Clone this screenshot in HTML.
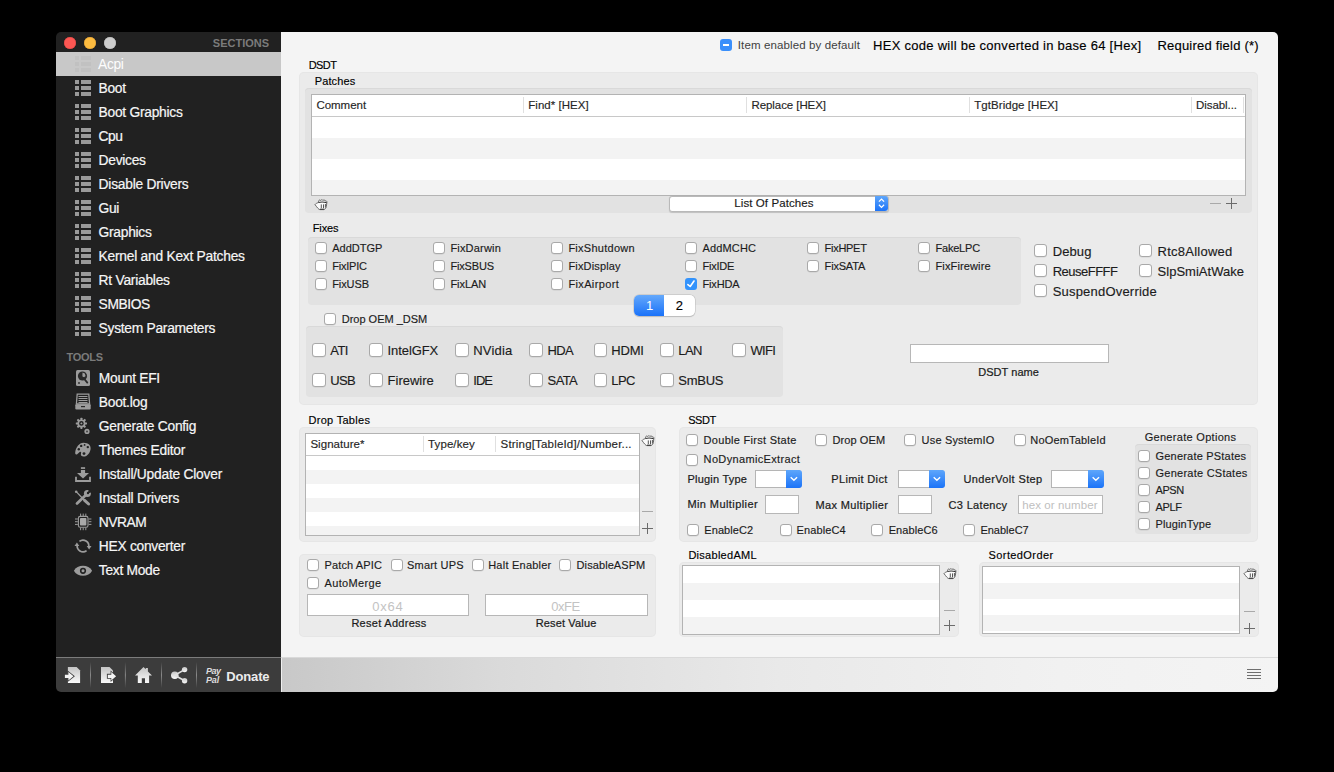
<!DOCTYPE html>
<html><head><meta charset="utf-8"><title>Clover Configurator - Acpi</title>
<style>
html,body{margin:0;padding:0;}
body{width:1334px;height:772px;background:#000;position:relative;overflow:hidden;font-family:"Liberation Sans",sans-serif;}
body div{position:absolute;box-sizing:content-box;}
.t{white-space:nowrap;}
.cbx{background:#fff;border:1px solid #a9a9a9;box-shadow:0 0.5px 0.5px rgba(0,0,0,0.10);}
.cbx.on{background:#3393fc;border:none;box-shadow:none;}
.cbx svg{position:absolute;left:0;top:0;}
</style></head><body>
<div style="left:56px;top:32px;width:1222px;height:660px;border-radius:5px;overflow:hidden;">
<div style="left:225px;top:0;width:997px;height:625px;background:#f4f4f4;"></div>
<div style="left:0;top:0;width:225px;height:625px;background:#212121;"></div>
<div style="left:0;top:20px;width:225px;height:24px;background:#c8c8c8;"></div>
<div style="left:0;top:625px;width:225px;height:35px;background:#3c3c3c;border-top:1px solid #7c7c7c;box-sizing:border-box;"></div>
<div style="left:225px;top:625px;width:997px;height:35px;background:linear-gradient(to right,#c8c8c8 0%,#dadada 22%,#e9e9e9 50%,#f1f1f1 78%,#f4f4f4 100%);border-top:1px solid #d9d9d9;box-sizing:border-box;"></div>
<div style="left:225px;top:626px;width:1px;height:34px;background:#efefef;"></div>
</div>
<div style="left:64px;top:37px;width:12px;height:12px;border-radius:50%;background:#fc5753;box-shadow:inset 0 0 0 0.5px #df4744;"></div>
<div style="left:84px;top:37px;width:12px;height:12px;border-radius:50%;background:#fdbc40;box-shadow:inset 0 0 0 0.5px #de9f34;"></div>
<div style="left:104px;top:37px;width:12px;height:12px;border-radius:50%;background:#cdcdcd;box-shadow:inset 0 0 0 0.5px #b9b9b9;"></div>
<div class="t" style="left:212.80px;top:38.00px;font-size:11px;line-height:11px;color:#7b7b7b;font-weight:bold;letter-spacing:-0.001px;">SECTIONS</div>
<div style="left:75px;top:56px;width:4px;height:4px;background:#c1c1c1;"></div>
<div style="left:81px;top:56px;width:10px;height:4px;background:#c1c1c1;"></div>
<div style="left:75px;top:62px;width:4px;height:4px;background:#c1c1c1;"></div>
<div style="left:81px;top:62px;width:10px;height:4px;background:#c1c1c1;"></div>
<div style="left:75px;top:68px;width:4px;height:4px;background:#c1c1c1;"></div>
<div style="left:81px;top:68px;width:10px;height:4px;background:#c1c1c1;"></div>
<div class="t" style="left:98.00px;top:58.00px;font-size:13.8px;line-height:13.8px;color:#fdfdfd;letter-spacing:-0.323px;">Acpi</div>
<div style="left:75px;top:80px;width:4px;height:4px;background:#9a9a9a;"></div>
<div style="left:81px;top:80px;width:10px;height:4px;background:#9a9a9a;"></div>
<div style="left:75px;top:86px;width:4px;height:4px;background:#9a9a9a;"></div>
<div style="left:81px;top:86px;width:10px;height:4px;background:#9a9a9a;"></div>
<div style="left:75px;top:92px;width:4px;height:4px;background:#9a9a9a;"></div>
<div style="left:81px;top:92px;width:10px;height:4px;background:#9a9a9a;"></div>
<div class="t" style="left:98.60px;top:82.00px;font-size:13.8px;line-height:13.8px;color:#f6f6f6;-webkit-text-stroke:0.2px #f6f6f6;letter-spacing:-0.333px;">Boot</div>
<div style="left:75px;top:104px;width:4px;height:4px;background:#9a9a9a;"></div>
<div style="left:81px;top:104px;width:10px;height:4px;background:#9a9a9a;"></div>
<div style="left:75px;top:110px;width:4px;height:4px;background:#9a9a9a;"></div>
<div style="left:81px;top:110px;width:10px;height:4px;background:#9a9a9a;"></div>
<div style="left:75px;top:116px;width:4px;height:4px;background:#9a9a9a;"></div>
<div style="left:81px;top:116px;width:10px;height:4px;background:#9a9a9a;"></div>
<div class="t" style="left:98.60px;top:106.00px;font-size:13.8px;line-height:13.8px;color:#f6f6f6;-webkit-text-stroke:0.2px #f6f6f6;letter-spacing:-0.263px;">Boot Graphics</div>
<div style="left:75px;top:128px;width:4px;height:4px;background:#9a9a9a;"></div>
<div style="left:81px;top:128px;width:10px;height:4px;background:#9a9a9a;"></div>
<div style="left:75px;top:134px;width:4px;height:4px;background:#9a9a9a;"></div>
<div style="left:81px;top:134px;width:10px;height:4px;background:#9a9a9a;"></div>
<div style="left:75px;top:140px;width:4px;height:4px;background:#9a9a9a;"></div>
<div style="left:81px;top:140px;width:10px;height:4px;background:#9a9a9a;"></div>
<div class="t" style="left:98.60px;top:130.00px;font-size:13.8px;line-height:13.8px;color:#f6f6f6;-webkit-text-stroke:0.2px #f6f6f6;letter-spacing:-0.463px;">Cpu</div>
<div style="left:75px;top:152px;width:4px;height:4px;background:#9a9a9a;"></div>
<div style="left:81px;top:152px;width:10px;height:4px;background:#9a9a9a;"></div>
<div style="left:75px;top:158px;width:4px;height:4px;background:#9a9a9a;"></div>
<div style="left:81px;top:158px;width:10px;height:4px;background:#9a9a9a;"></div>
<div style="left:75px;top:164px;width:4px;height:4px;background:#9a9a9a;"></div>
<div style="left:81px;top:164px;width:10px;height:4px;background:#9a9a9a;"></div>
<div class="t" style="left:98.60px;top:154.00px;font-size:13.8px;line-height:13.8px;color:#f6f6f6;-webkit-text-stroke:0.2px #f6f6f6;letter-spacing:-0.293px;">Devices</div>
<div style="left:75px;top:176px;width:4px;height:4px;background:#9a9a9a;"></div>
<div style="left:81px;top:176px;width:10px;height:4px;background:#9a9a9a;"></div>
<div style="left:75px;top:182px;width:4px;height:4px;background:#9a9a9a;"></div>
<div style="left:81px;top:182px;width:10px;height:4px;background:#9a9a9a;"></div>
<div style="left:75px;top:188px;width:4px;height:4px;background:#9a9a9a;"></div>
<div style="left:81px;top:188px;width:10px;height:4px;background:#9a9a9a;"></div>
<div class="t" style="left:98.60px;top:178.00px;font-size:13.8px;line-height:13.8px;color:#f6f6f6;-webkit-text-stroke:0.2px #f6f6f6;letter-spacing:-0.243px;">Disable Drivers</div>
<div style="left:75px;top:200px;width:4px;height:4px;background:#9a9a9a;"></div>
<div style="left:81px;top:200px;width:10px;height:4px;background:#9a9a9a;"></div>
<div style="left:75px;top:206px;width:4px;height:4px;background:#9a9a9a;"></div>
<div style="left:81px;top:206px;width:10px;height:4px;background:#9a9a9a;"></div>
<div style="left:75px;top:212px;width:4px;height:4px;background:#9a9a9a;"></div>
<div style="left:81px;top:212px;width:10px;height:4px;background:#9a9a9a;"></div>
<div class="t" style="left:98.60px;top:202.00px;font-size:13.8px;line-height:13.8px;color:#f6f6f6;-webkit-text-stroke:0.2px #f6f6f6;letter-spacing:-0.382px;">Gui</div>
<div style="left:75px;top:224px;width:4px;height:4px;background:#9a9a9a;"></div>
<div style="left:81px;top:224px;width:10px;height:4px;background:#9a9a9a;"></div>
<div style="left:75px;top:230px;width:4px;height:4px;background:#9a9a9a;"></div>
<div style="left:81px;top:230px;width:10px;height:4px;background:#9a9a9a;"></div>
<div style="left:75px;top:236px;width:4px;height:4px;background:#9a9a9a;"></div>
<div style="left:81px;top:236px;width:10px;height:4px;background:#9a9a9a;"></div>
<div class="t" style="left:98.60px;top:226.00px;font-size:13.8px;line-height:13.8px;color:#f6f6f6;-webkit-text-stroke:0.2px #f6f6f6;letter-spacing:-0.283px;">Graphics</div>
<div style="left:75px;top:248px;width:4px;height:4px;background:#9a9a9a;"></div>
<div style="left:81px;top:248px;width:10px;height:4px;background:#9a9a9a;"></div>
<div style="left:75px;top:254px;width:4px;height:4px;background:#9a9a9a;"></div>
<div style="left:81px;top:254px;width:10px;height:4px;background:#9a9a9a;"></div>
<div style="left:75px;top:260px;width:4px;height:4px;background:#9a9a9a;"></div>
<div style="left:81px;top:260px;width:10px;height:4px;background:#9a9a9a;"></div>
<div class="t" style="left:98.60px;top:250.00px;font-size:13.8px;line-height:13.8px;color:#f6f6f6;-webkit-text-stroke:0.2px #f6f6f6;letter-spacing:-0.249px;">Kernel and Kext Patches</div>
<div style="left:75px;top:272px;width:4px;height:4px;background:#9a9a9a;"></div>
<div style="left:81px;top:272px;width:10px;height:4px;background:#9a9a9a;"></div>
<div style="left:75px;top:278px;width:4px;height:4px;background:#9a9a9a;"></div>
<div style="left:81px;top:278px;width:10px;height:4px;background:#9a9a9a;"></div>
<div style="left:75px;top:284px;width:4px;height:4px;background:#9a9a9a;"></div>
<div style="left:81px;top:284px;width:10px;height:4px;background:#9a9a9a;"></div>
<div class="t" style="left:98.60px;top:274.00px;font-size:13.8px;line-height:13.8px;color:#f6f6f6;-webkit-text-stroke:0.2px #f6f6f6;letter-spacing:-0.248px;">Rt Variables</div>
<div style="left:75px;top:296px;width:4px;height:4px;background:#9a9a9a;"></div>
<div style="left:81px;top:296px;width:10px;height:4px;background:#9a9a9a;"></div>
<div style="left:75px;top:302px;width:4px;height:4px;background:#9a9a9a;"></div>
<div style="left:81px;top:302px;width:10px;height:4px;background:#9a9a9a;"></div>
<div style="left:75px;top:308px;width:4px;height:4px;background:#9a9a9a;"></div>
<div style="left:81px;top:308px;width:10px;height:4px;background:#9a9a9a;"></div>
<div class="t" style="left:98.60px;top:298.00px;font-size:13.8px;line-height:13.8px;color:#f6f6f6;-webkit-text-stroke:0.2px #f6f6f6;letter-spacing:-0.390px;">SMBIOS</div>
<div style="left:75px;top:320px;width:4px;height:4px;background:#9a9a9a;"></div>
<div style="left:81px;top:320px;width:10px;height:4px;background:#9a9a9a;"></div>
<div style="left:75px;top:326px;width:4px;height:4px;background:#9a9a9a;"></div>
<div style="left:81px;top:326px;width:10px;height:4px;background:#9a9a9a;"></div>
<div style="left:75px;top:332px;width:4px;height:4px;background:#9a9a9a;"></div>
<div style="left:81px;top:332px;width:10px;height:4px;background:#9a9a9a;"></div>
<div class="t" style="left:98.60px;top:322.00px;font-size:13.8px;line-height:13.8px;color:#f6f6f6;-webkit-text-stroke:0.2px #f6f6f6;letter-spacing:-0.274px;">System Parameters</div>
<div class="t" style="left:66.50px;top:352.00px;font-size:11px;line-height:11px;color:#7a7a7a;font-weight:bold;letter-spacing:-0.269px;">TOOLS</div>
<div class="t" style="left:98.80px;top:372.00px;font-size:13.8px;line-height:13.8px;color:#f6f6f6;-webkit-text-stroke:0.2px #f6f6f6;letter-spacing:-0.293px;">Mount EFI</div>
<div class="t" style="left:98.80px;top:396.00px;font-size:13.8px;line-height:13.8px;color:#f6f6f6;-webkit-text-stroke:0.2px #f6f6f6;letter-spacing:-0.264px;">Boot.log</div>
<div class="t" style="left:98.80px;top:420.00px;font-size:13.8px;line-height:13.8px;color:#f6f6f6;-webkit-text-stroke:0.2px #f6f6f6;letter-spacing:-0.265px;">Generate Config</div>
<div class="t" style="left:98.80px;top:444.00px;font-size:13.8px;line-height:13.8px;color:#f6f6f6;-webkit-text-stroke:0.2px #f6f6f6;letter-spacing:-0.274px;">Themes Editor</div>
<div class="t" style="left:98.80px;top:468.00px;font-size:13.8px;line-height:13.8px;color:#f6f6f6;-webkit-text-stroke:0.2px #f6f6f6;letter-spacing:-0.231px;">Install/Update Clover</div>
<div class="t" style="left:98.80px;top:492.00px;font-size:13.8px;line-height:13.8px;color:#f6f6f6;-webkit-text-stroke:0.2px #f6f6f6;letter-spacing:-0.215px;">Install Drivers</div>
<div class="t" style="left:98.80px;top:516.00px;font-size:13.8px;line-height:13.8px;color:#f6f6f6;-webkit-text-stroke:0.2px #f6f6f6;letter-spacing:-0.447px;">NVRAM</div>
<div class="t" style="left:98.80px;top:540.00px;font-size:13.8px;line-height:13.8px;color:#f6f6f6;-webkit-text-stroke:0.2px #f6f6f6;letter-spacing:-0.274px;">HEX converter</div>
<div class="t" style="left:98.80px;top:564.00px;font-size:13.8px;line-height:13.8px;color:#f6f6f6;-webkit-text-stroke:0.2px #f6f6f6;letter-spacing:-0.292px;">Text Mode</div>
<svg style="position:absolute;left:75px;top:369px;" width="16" height="18" viewBox="0 0 16 18"><rect x="1" y="1" width="14" height="16" rx="1.5" fill="#9c9c9c"/><circle cx="7.5" cy="7" r="4.6" fill="#2a2a2a"/><path d="M7.5 3.6 L9.8 4.6 L10.6 7 L8.8 8.4 L7.4 7.2Z" fill="#9c9c9c"/><path d="M8.5 9 L12.3 13.6" stroke="#2a2a2a" stroke-width="1.8" stroke-linecap="round"/><circle cx="4" cy="14" r="0.9" fill="#2a2a2a"/></svg>
<svg style="position:absolute;left:75px;top:393px;" width="16" height="18" viewBox="0 0 16 18"><path d="M2.2 1.2 H13.8 L14.6 11 H1.4 Z" fill="none" stroke="#9c9c9c" stroke-width="1.3"/><rect x="3.5" y="3" width="9" height="1" fill="#9c9c9c"/><rect x="3.5" y="5" width="9" height="1" fill="#9c9c9c"/><rect x="3.5" y="7" width="9" height="1" fill="#9c9c9c"/><rect x="3.5" y="9" width="9" height="1" fill="#9c9c9c"/><rect x="0.3" y="11.3" width="15.4" height="5.2" rx="1" fill="#9c9c9c"/><rect x="6" y="13" width="4" height="1.2" fill="#2a2a2a"/></svg>
<svg style="position:absolute;left:75px;top:416px;" width="16" height="18" viewBox="0 0 16 18"><rect x="5.40" y="1.80" width="2.0" height="2.60" rx="0.4" fill="#9c9c9c" transform="rotate(0.0 6.4 7.4)"/><rect x="5.40" y="1.80" width="2.0" height="2.60" rx="0.4" fill="#9c9c9c" transform="rotate(45.0 6.4 7.4)"/><rect x="5.40" y="1.80" width="2.0" height="2.60" rx="0.4" fill="#9c9c9c" transform="rotate(90.0 6.4 7.4)"/><rect x="5.40" y="1.80" width="2.0" height="2.60" rx="0.4" fill="#9c9c9c" transform="rotate(135.0 6.4 7.4)"/><rect x="5.40" y="1.80" width="2.0" height="2.60" rx="0.4" fill="#9c9c9c" transform="rotate(180.0 6.4 7.4)"/><rect x="5.40" y="1.80" width="2.0" height="2.60" rx="0.4" fill="#9c9c9c" transform="rotate(225.0 6.4 7.4)"/><rect x="5.40" y="1.80" width="2.0" height="2.60" rx="0.4" fill="#9c9c9c" transform="rotate(270.0 6.4 7.4)"/><rect x="5.40" y="1.80" width="2.0" height="2.60" rx="0.4" fill="#9c9c9c" transform="rotate(315.0 6.4 7.4)"/><circle cx="6.4" cy="7.4" r="4.0" fill="#9c9c9c"/><circle cx="6.4" cy="7.4" r="2.3" fill="#232323"/><rect x="5.6" y="6.6" width="1.6" height="1.6" fill="#9c9c9c" transform="rotate(45 6.4 7.4)"/><circle cx="12" cy="15.4" r="2.6" fill="#9c9c9c"/><circle cx="12" cy="15.4" r="1.0" fill="#444"/></svg>
<svg style="position:absolute;left:74px;top:441px;" width="18" height="17" viewBox="0 0 18 17"><path d="M9.5 1.8 C14.5 1.8 17 4.6 16.6 8 C16.2 11.4 13.6 15.6 9.6 15.6 C7.6 15.6 6.4 14.4 7 12.6 C7.6 11 6.6 10.2 5.4 11.2 L3.2 13.2 C1.6 14.2 0.9 12.8 1.3 10.8 C2 6.2 5.2 1.8 9.5 1.8Z" fill="#9c9c9c"/><circle cx="4.8" cy="8.2" r="1.2" fill="#212121"/><circle cx="7.2" cy="4.9" r="1.2" fill="#212121"/><circle cx="10.6" cy="3.9" r="0.9" fill="#212121"/><circle cx="13.8" cy="6.1" r="1.2" fill="#212121"/><circle cx="10" cy="12.6" r="1.4" fill="#212121"/></svg>
<svg style="position:absolute;left:75px;top:465px;" width="16" height="18" viewBox="0 0 16 18"><rect x="5.9" y="2.2" width="4.2" height="1.7" fill="#9c9c9c"/><path d="M5.9 4.9 H10.1 V7.9 H14.0 L8 13.4 L2.0 7.9 H5.9Z" fill="#9c9c9c"/><path d="M1.0 11.8 V16.0 H15.0 V11.8" fill="none" stroke="#9c9c9c" stroke-width="1.8"/></svg>
<svg style="position:absolute;left:72px;top:486px;" width="22" height="22" viewBox="0 0 22 22"><path d="M4.40 5.90 L12.40 14.20" stroke="#9c9c9c" stroke-width="1.3" stroke-linecap="round"/><circle cx="4.200000000000003" cy="5.699999999999989" r="1.3" fill="#9c9c9c"/><path d="M12.60 14.40 L16.60 18.00" stroke="#9c9c9c" stroke-width="3.0" stroke-linecap="round"/><path d="M5.00 17.40 L13.60 9.20" stroke="#9c9c9c" stroke-width="2.8" stroke-linecap="round"/><circle cx="15.400000000000006" cy="7.600000000000023" r="3.5" fill="#9c9c9c"/><path d="M15.60 7.40 L17.00 3.00 L20.40 6.00 Z" fill="#212121"/><circle cx="16.0" cy="7.0" r="1.2" fill="#212121"/></svg>
<svg style="position:absolute;left:72px;top:510px;" width="22" height="22" viewBox="0 0 22 22"><rect x="6.400000000000006" y="6.399999999999977" width="9.6" height="10.8" rx="1.8" fill="none" stroke="#9c9c9c" stroke-width="1.1"/><rect x="8.0" y="8.0" width="6.4" height="7.6" rx="0.8" fill="#a9a9a9"/><rect x="8.10" y="3.6000000000000227" width="1" height="2.6" fill="#9c9c9c"/><rect x="8.10" y="17.600000000000023" width="1" height="2.6" fill="#9c9c9c"/><rect x="3.0" y="8.50" width="2.8" height="1" fill="#9c9c9c"/><rect x="16.599999999999994" y="8.50" width="2.8" height="1" fill="#9c9c9c"/><rect x="10.70" y="3.6000000000000227" width="1" height="2.6" fill="#9c9c9c"/><rect x="10.70" y="17.600000000000023" width="1" height="2.6" fill="#9c9c9c"/><rect x="3.0" y="11.20" width="2.8" height="1" fill="#9c9c9c"/><rect x="16.599999999999994" y="11.20" width="2.8" height="1" fill="#9c9c9c"/><rect x="13.30" y="3.6000000000000227" width="1" height="2.6" fill="#9c9c9c"/><rect x="13.30" y="17.600000000000023" width="1" height="2.6" fill="#9c9c9c"/><rect x="3.0" y="13.90" width="2.8" height="1" fill="#9c9c9c"/><rect x="16.599999999999994" y="13.90" width="2.8" height="1" fill="#9c9c9c"/></svg>
<svg style="position:absolute;left:70px;top:534px;" width="24" height="24" viewBox="0 0 24 24"><path d="M9.43 7.43 A5.8 5.8 0 0 1 18.67 13.21" fill="none" stroke="#9c9c9c" stroke-width="1.7"/><path d="M16.57 16.57 A5.8 5.8 0 0 1 7.33 10.79" fill="none" stroke="#9c9c9c" stroke-width="1.7"/><path d="M16.7 12.0 L21.5 12.0 L19.1 15.6Z" fill="#9c9c9c"/><path d="M4.5 12.0 L9.3 12.0 L6.9 8.4Z" fill="#9c9c9c"/></svg>
<svg style="position:absolute;left:70px;top:560px;" width="24" height="20" viewBox="0 0 24 20"><path d="M3.9 10.8 C7.2 4.2 18.8 4.2 22.1 10.8 C18.8 17.4 7.2 17.4 3.9 10.8Z" fill="#9c9c9c"/><circle cx="13" cy="10.8" r="3.1" fill="#212121"/><circle cx="13" cy="10.8" r="1.5" fill="#9c9c9c"/></svg>
<svg style="position:absolute;left:56px;top:657px;" width="225" height="34" viewBox="0 0 225 34"><defs><linearGradient id="ig" x1="0" y1="0" x2="0" y2="1"><stop offset="0" stop-color="#c4c4c4"/><stop offset="1" stop-color="#fafafa"/></linearGradient>
<linearGradient id="sg" x1="0" y1="0" x2="0" y2="1"><stop offset="0" stop-color="#3c3c3c"/><stop offset="0.5" stop-color="#8a8a8a"/><stop offset="1" stop-color="#3c3c3c"/></linearGradient></defs><polygon points="11.90,10.00 20.60,10.00 24.10,13.50 24.10,26.00 11.90,26.00" fill="url(#ig)"/><polygon points="11.60,13.60 18.90,19.30 11.60,25.00 11.60,21.60 8.30,21.60 8.30,17.00 11.60,17.00" fill="#3c3c3c"/><polygon points="12.40,15.00 17.50,19.30 12.40,23.60 12.40,20.90 8.90,20.90 8.90,17.70 12.40,17.70" fill="#f4f4f4"/><polygon points="45.00,10.00 53.50,10.00 57.00,13.50 57.00,26.00 45.00,26.00" fill="url(#ig)"/><polygon points="54.60,13.60 61.20,19.30 54.60,25.00 54.60,21.80 50.90,21.80 50.90,16.80 54.60,16.80" fill="#3c3c3c"/><polygon points="55.30,15.00 60.10,19.30 55.30,23.60 55.30,20.90 51.80,20.90 51.80,17.70 55.30,17.70" fill="#f4f4f4"/><polygon points="87.50,10.00 89.80,12.30 89.80,10.90 91.90,10.90 91.90,14.40 96.00,18.60 93.10,18.60 93.10,26.00 89.00,26.00 89.00,21.20 85.80,21.20 85.80,26.00 81.80,26.00 81.80,18.60 79.00,18.60" fill="url(#ig)"/><g fill="url(#ig)" stroke="none"><circle cx="118.80000000000001" cy="18.200000000000045" r="3.8"/><circle cx="128.6" cy="12.600000000000023" r="2.7"/><circle cx="128.6" cy="23.700000000000045" r="2.7"/></g><path d="M118.80000000000001 18.200000000000045 L128.6 12.600000000000023 M118.80000000000001 18.200000000000045 L128.6 23.700000000000045" stroke="#e0e0e0" stroke-width="1.6"/><rect x="34.00" y="5" width="1" height="26" fill="url(#sg)"/><rect x="68.90" y="5" width="1" height="26" fill="url(#sg)"/><rect x="105.00" y="5" width="1" height="26" fill="url(#sg)"/><rect x="140.00" y="5" width="1" height="26" fill="url(#sg)"/></svg>
<div class="t" style="left:206.00px;top:667.00px;font-size:9px;line-height:9px;color:#dcdcdc;font-weight:bold;font-style:italic;letter-spacing:-0.513px;">Pay</div>
<div class="t" style="left:206.00px;top:676.00px;font-size:9px;line-height:9px;color:#dcdcdc;font-weight:bold;font-style:italic;letter-spacing:-0.140px;">Pal</div>
<div class="t" style="left:226.30px;top:670.00px;font-size:13px;line-height:13px;color:#ececec;font-weight:bold;letter-spacing:-0.154px;">Donate</div>
<div style="left:1247px;top:669px;width:14px;height:1px;background:#6f6f6f;"></div>
<div style="left:1247px;top:672px;width:14px;height:1px;background:#6f6f6f;"></div>
<div style="left:1247px;top:675px;width:14px;height:1px;background:#6f6f6f;"></div>
<div style="left:1247px;top:678px;width:14px;height:1px;background:#6f6f6f;"></div>
<div style="left:720px;top:39px;width:12px;height:12px;border-radius:3px;background:#3a8ffb;"></div>
<div style="left:723px;top:44px;width:6px;height:2px;background:#fff;"></div>
<div class="t" style="left:737.80px;top:40.00px;font-size:11.5px;line-height:11.5px;color:#3f3f3f;letter-spacing:0.116px;">Item enabled by default</div>
<div class="t" style="left:873.10px;top:39.00px;font-size:13px;line-height:13px;color:#000;-webkit-text-stroke:0.15px #000;letter-spacing:0.272px;">HEX code will be converted in base 64 [Hex]</div>
<div class="t" style="left:1157.40px;top:39.00px;font-size:13px;line-height:13px;color:#000;-webkit-text-stroke:0.15px #000;letter-spacing:0.214px;">Required field (*)</div>
<div class="t" style="left:308.70px;top:60.00px;font-size:11px;line-height:11px;color:#000;-webkit-text-stroke:0.15px #000;letter-spacing:-0.573px;">DSDT</div>
<div style="left:299px;top:72px;width:959px;height:332.5px;background:#ebebeb;border-radius:5px;box-shadow:inset 0 0 0 1px #e6e6e6;"></div>
<div class="t" style="left:314.70px;top:76.00px;font-size:11px;line-height:11px;color:#000;-webkit-text-stroke:0.15px #000;letter-spacing:0.122px;">Patches</div>
<div style="left:305px;top:88px;width:947px;height:124.5px;background:#e2e2e2;border-radius:4px;box-shadow:inset 0 1px 0 #d9d9d9;"></div>
<div style="left:311px;top:94px;width:933.0px;height:100.0px;background:#fff;border:1px solid #b3b3b3;overflow:hidden;">
<div style="left:0;top:43.00px;width:935.00px;height:21.00px;background:#f3f3f3;"></div>
<div style="left:0;top:85.00px;width:935.00px;height:15.00px;background:#f3f3f3;"></div>
</div>
<div style="left:312px;top:116px;width:933px;height:1px;background:#c8c8c8;"></div>
<div style="left:523px;top:97px;width:1px;height:16px;background:#e0e0e0;"></div>
<div style="left:746px;top:97px;width:1px;height:16px;background:#e0e0e0;"></div>
<div style="left:969px;top:97px;width:1px;height:16px;background:#e0e0e0;"></div>
<div style="left:1191px;top:97px;width:1px;height:16px;background:#e0e0e0;"></div>
<div style="left:1243px;top:97px;width:1px;height:16px;background:#e0e0e0;"></div>
<div class="t" style="left:316.40px;top:100.00px;font-size:11.5px;line-height:11.5px;color:#262626;-webkit-text-stroke:0.15px #262626;letter-spacing:-0.025px;">Comment</div>
<div class="t" style="left:528.30px;top:100.00px;font-size:11.5px;line-height:11.5px;color:#262626;-webkit-text-stroke:0.15px #262626;letter-spacing:0.021px;">Find* [HEX]</div>
<div class="t" style="left:751.50px;top:100.00px;font-size:11.5px;line-height:11.5px;color:#262626;-webkit-text-stroke:0.15px #262626;letter-spacing:-0.078px;">Replace [HEX]</div>
<div class="t" style="left:974.30px;top:100.00px;font-size:11.5px;line-height:11.5px;color:#262626;-webkit-text-stroke:0.15px #262626;letter-spacing:0.044px;">TgtBridge [HEX]</div>
<div class="t" style="left:1196.00px;top:100.00px;font-size:11.5px;line-height:11.5px;color:#262626;-webkit-text-stroke:0.15px #262626;letter-spacing:-0.064px;">Disabl...</div>
<svg style="position:absolute;left:314px;top:198px;" width="14" height="13" viewBox="0 0 14 13"><path d="M1.0 6.6 C1.6 5.6 3.0 5.0 4.4 4.6 L4.6 3.2 C4.8 1.9 6.1 1.6 6.7 2.6 C7.2 1.4 8.6 1.4 9.0 2.6 C9.6 1.6 10.9 1.8 11.1 3.0 C11.9 2.5 13.0 3.0 12.9 4.2 L12.4 8.4 C12.1 10.2 11.0 11.4 9.6 11.6 L5.8 11.6 C4.6 11.4 3.4 9.8 1.0 6.6Z" fill="#fbfbfb" stroke="#5a5a5a" stroke-width="0.9" stroke-linejoin="round"/><path d="M4.5 4.6 C6.5 3.9 9.5 3.9 12.6 4.6" fill="none" stroke="#333" stroke-width="1.1"/><path d="M7.3 6.4 V10.2 M9.5 6.4 V10.2 M11.4 6.0 V9.6" stroke="#444" stroke-width="0.9"/><path d="M6.0 11.2 H10.2" stroke="#333" stroke-width="1.0"/></svg>
<div style="left:668.5px;top:196.3px;width:218.50px;height:13.40px;background:#fff;border:0.5px solid #b9b9b9;border-radius:3px;box-shadow:0 0.5px 1px rgba(0,0,0,0.15);"></div>
<div style="left:875px;top:196.3px;width:13.00px;height:14.40px;background:linear-gradient(#5ea6fb,#1b73f8);border-radius:0 3px 3px 0;"></div>
<svg style="position:absolute;left:875px;top:196.3px;" width="13" height="14.4" viewBox="0 0 13 14.4"><path d="M3.90 5.60 L6.50 3.00 L9.10 5.60 M3.90 8.80 L6.50 11.40 L9.10 8.80" fill="none" stroke="#fff" stroke-width="1.2"/></svg>
<div class="t" style="left:734.30px;top:198.00px;font-size:11.5px;line-height:11.5px;color:#1a1a1a;-webkit-text-stroke:0.15px #1a1a1a;letter-spacing:0.088px;">List Of Patches</div>
<div style="left:1210px;top:203px;width:11px;height:1px;background:#a9a9a9;"></div>
<div style="left:1226px;top:203px;width:11px;height:1px;background:#6b6b6b;"></div>
<div style="left:1231px;top:198px;width:1px;height:11px;background:#6b6b6b;"></div>
<div class="t" style="left:312.80px;top:223.00px;font-size:11px;line-height:11px;color:#000;-webkit-text-stroke:0.15px #000;letter-spacing:-0.147px;">Fixes</div>
<div style="left:308px;top:237px;width:713px;height:67.5px;background:#e2e2e2;border-radius:4px;box-shadow:inset 0 1px 0 #d9d9d9;"></div>
<div class="cbx" style="left:315px;top:242px;width:10px;height:10px;border-radius:3px;"></div>
<div class="t" style="left:332.20px;top:243.00px;font-size:11px;line-height:11px;color:#1c1c1c;-webkit-text-stroke:0.15px #1c1c1c;">AddDTGP</div>
<div class="cbx" style="left:315px;top:260px;width:10px;height:10px;border-radius:3px;"></div>
<div class="t" style="left:332.20px;top:261.00px;font-size:11px;line-height:11px;color:#1c1c1c;-webkit-text-stroke:0.15px #1c1c1c;letter-spacing:-0.213px;">FixIPIC</div>
<div class="cbx" style="left:315px;top:278px;width:10px;height:10px;border-radius:3px;"></div>
<div class="t" style="left:332.20px;top:279.00px;font-size:11px;line-height:11px;color:#1c1c1c;-webkit-text-stroke:0.15px #1c1c1c;letter-spacing:-0.078px;">FixUSB</div>
<div class="cbx" style="left:433px;top:242px;width:10px;height:10px;border-radius:3px;"></div>
<div class="t" style="left:450.40px;top:243.00px;font-size:11px;line-height:11px;color:#1c1c1c;-webkit-text-stroke:0.15px #1c1c1c;letter-spacing:0.188px;">FixDarwin</div>
<div class="cbx" style="left:433px;top:260px;width:10px;height:10px;border-radius:3px;"></div>
<div class="t" style="left:450.40px;top:261.00px;font-size:11px;line-height:11px;color:#1c1c1c;-webkit-text-stroke:0.15px #1c1c1c;letter-spacing:-0.167px;">FixSBUS</div>
<div class="cbx" style="left:433px;top:278px;width:10px;height:10px;border-radius:3px;"></div>
<div class="t" style="left:450.40px;top:279.00px;font-size:11px;line-height:11px;color:#1c1c1c;-webkit-text-stroke:0.15px #1c1c1c;letter-spacing:-0.036px;">FixLAN</div>
<div class="cbx" style="left:551px;top:242px;width:10px;height:10px;border-radius:3px;"></div>
<div class="t" style="left:568.40px;top:243.00px;font-size:11px;line-height:11px;color:#1c1c1c;-webkit-text-stroke:0.15px #1c1c1c;letter-spacing:0.262px;">FixShutdown</div>
<div class="cbx" style="left:551px;top:260px;width:10px;height:10px;border-radius:3px;"></div>
<div class="t" style="left:568.40px;top:261.00px;font-size:11px;line-height:11px;color:#1c1c1c;-webkit-text-stroke:0.15px #1c1c1c;letter-spacing:0.166px;">FixDisplay</div>
<div class="cbx" style="left:551px;top:278px;width:10px;height:10px;border-radius:3px;"></div>
<div class="t" style="left:568.40px;top:279.00px;font-size:11px;line-height:11px;color:#1c1c1c;-webkit-text-stroke:0.15px #1c1c1c;letter-spacing:0.369px;">FixAirport</div>
<div class="cbx" style="left:685px;top:242px;width:10px;height:10px;border-radius:3px;"></div>
<div class="t" style="left:702.50px;top:243.00px;font-size:11px;line-height:11px;color:#1c1c1c;-webkit-text-stroke:0.15px #1c1c1c;letter-spacing:0.153px;">AddMCHC</div>
<div class="cbx" style="left:685px;top:260px;width:10px;height:10px;border-radius:3px;"></div>
<div class="t" style="left:702.50px;top:261.00px;font-size:11px;line-height:11px;color:#1c1c1c;-webkit-text-stroke:0.15px #1c1c1c;letter-spacing:-0.240px;">FixIDE</div>
<div class="cbx on" style="left:685px;top:278px;width:12px;height:12px;border-radius:3px;"><svg width="12" height="12" viewBox="0 0 12 12"><path d="M2.9 6.6 L5.2 8.5 L9.0 3.0" fill="none" stroke="#fff" stroke-width="1.6" stroke-linecap="round" stroke-linejoin="round"/></svg></div>
<div class="t" style="left:702.50px;top:279.00px;font-size:11px;line-height:11px;color:#1c1c1c;-webkit-text-stroke:0.15px #1c1c1c;letter-spacing:-0.159px;">FixHDA</div>
<div class="cbx" style="left:807px;top:242px;width:10px;height:10px;border-radius:3px;"></div>
<div class="t" style="left:824.60px;top:243.00px;font-size:11px;line-height:11px;color:#1c1c1c;-webkit-text-stroke:0.15px #1c1c1c;letter-spacing:-0.283px;">FixHPET</div>
<div class="cbx" style="left:807px;top:260px;width:10px;height:10px;border-radius:3px;"></div>
<div class="t" style="left:824.60px;top:261.00px;font-size:11px;line-height:11px;color:#1c1c1c;-webkit-text-stroke:0.15px #1c1c1c;letter-spacing:-0.183px;">FixSATA</div>
<div class="cbx" style="left:918px;top:242px;width:10px;height:10px;border-radius:3px;"></div>
<div class="t" style="left:935.50px;top:243.00px;font-size:11px;line-height:11px;color:#1c1c1c;-webkit-text-stroke:0.15px #1c1c1c;letter-spacing:-0.212px;">FakeLPC</div>
<div class="cbx" style="left:918px;top:260px;width:10px;height:10px;border-radius:3px;"></div>
<div class="t" style="left:935.50px;top:261.00px;font-size:11px;line-height:11px;color:#1c1c1c;-webkit-text-stroke:0.15px #1c1c1c;letter-spacing:0.131px;">FixFirewire</div>
<div style="left:634px;top:295px;width:61px;height:21px;border-radius:5px;background:#fff;box-shadow:0 0 0 0.5px #bdbdbd, 0 0.5px 1px rgba(0,0,0,0.2);overflow:hidden;"><div style="left:0;top:0;width:30px;height:21px;background:linear-gradient(#64a8fb,#1a72f9);"></div></div>
<div class="t" style="left:645.89px;top:299.00px;font-size:13px;line-height:13px;color:#fff;">1</div>
<div class="t" style="left:675.69px;top:299.00px;font-size:13px;line-height:13px;color:#000;-webkit-text-stroke:0.15px #000;">2</div>
<div class="cbx" style="left:1034px;top:244px;width:11px;height:11px;border-radius:3px;"></div>
<div class="t" style="left:1052.70px;top:245.00px;font-size:13px;line-height:13px;color:#1c1c1c;-webkit-text-stroke:0.15px #1c1c1c;letter-spacing:0.104px;">Debug</div>
<div class="cbx" style="left:1034px;top:264px;width:11px;height:11px;border-radius:3px;"></div>
<div class="t" style="left:1052.70px;top:265.00px;font-size:13px;line-height:13px;color:#1c1c1c;-webkit-text-stroke:0.15px #1c1c1c;letter-spacing:-0.507px;">ReuseFFFF</div>
<div class="cbx" style="left:1034px;top:284px;width:11px;height:11px;border-radius:3px;"></div>
<div class="t" style="left:1052.70px;top:285.00px;font-size:13px;line-height:13px;color:#1c1c1c;-webkit-text-stroke:0.15px #1c1c1c;letter-spacing:0.200px;">SuspendOverride</div>
<div class="cbx" style="left:1139px;top:244px;width:11px;height:11px;border-radius:3px;"></div>
<div class="t" style="left:1157.60px;top:245.00px;font-size:13px;line-height:13px;color:#1c1c1c;-webkit-text-stroke:0.15px #1c1c1c;letter-spacing:0.242px;">Rtc8Allowed</div>
<div class="cbx" style="left:1139px;top:264px;width:11px;height:11px;border-radius:3px;"></div>
<div class="t" style="left:1157.60px;top:265.00px;font-size:13px;line-height:13px;color:#1c1c1c;-webkit-text-stroke:0.15px #1c1c1c;letter-spacing:0.010px;">SlpSmiAtWake</div>
<div class="cbx" style="left:324px;top:313px;width:10px;height:10px;border-radius:3px;"></div>
<div class="t" style="left:341.80px;top:314.00px;font-size:11px;line-height:11px;color:#1c1c1c;-webkit-text-stroke:0.15px #1c1c1c;letter-spacing:-0.015px;">Drop OEM _DSM</div>
<div style="left:305.5px;top:326.3px;width:477.0px;height:71.0px;background:#e2e2e2;border-radius:4px;box-shadow:inset 0 1px 0 #d9d9d9;"></div>
<div class="cbx" style="left:312.4px;top:343.2px;width:11.5px;height:11.5px;border-radius:3px;"></div>
<div class="t" style="left:330.30px;top:344.00px;font-size:13px;line-height:13px;color:#1c1c1c;-webkit-text-stroke:0.15px #1c1c1c;letter-spacing:-0.570px;">ATI</div>
<div class="cbx" style="left:369.3px;top:343.2px;width:11.5px;height:11.5px;border-radius:3px;"></div>
<div class="t" style="left:387.60px;top:344.00px;font-size:13px;line-height:13px;color:#1c1c1c;-webkit-text-stroke:0.15px #1c1c1c;letter-spacing:-0.098px;">IntelGFX</div>
<div class="cbx" style="left:455.2px;top:343.2px;width:11.5px;height:11.5px;border-radius:3px;"></div>
<div class="t" style="left:473.30px;top:344.00px;font-size:13px;line-height:13px;color:#1c1c1c;-webkit-text-stroke:0.15px #1c1c1c;letter-spacing:0.162px;">NVidia</div>
<div class="cbx" style="left:529.2px;top:343.2px;width:11.5px;height:11.5px;border-radius:3px;"></div>
<div class="t" style="left:547.60px;top:344.00px;font-size:13px;line-height:13px;color:#1c1c1c;-webkit-text-stroke:0.15px #1c1c1c;letter-spacing:-0.648px;">HDA</div>
<div class="cbx" style="left:593.5px;top:343.2px;width:11.5px;height:11.5px;border-radius:3px;"></div>
<div class="t" style="left:611.30px;top:344.00px;font-size:13px;line-height:13px;color:#1c1c1c;-webkit-text-stroke:0.15px #1c1c1c;letter-spacing:-0.205px;">HDMI</div>
<div class="cbx" style="left:660.4px;top:343.2px;width:11.5px;height:11.5px;border-radius:3px;"></div>
<div class="t" style="left:678.30px;top:344.00px;font-size:13px;line-height:13px;color:#1c1c1c;-webkit-text-stroke:0.15px #1c1c1c;letter-spacing:-0.592px;">LAN</div>
<div class="cbx" style="left:732px;top:343.2px;width:11.5px;height:11.5px;border-radius:3px;"></div>
<div class="t" style="left:750.40px;top:344.00px;font-size:13px;line-height:13px;color:#1c1c1c;-webkit-text-stroke:0.15px #1c1c1c;letter-spacing:-0.643px;">WIFI</div>
<div class="cbx" style="left:312.4px;top:373.2px;width:11.5px;height:11.5px;border-radius:3px;"></div>
<div class="t" style="left:330.30px;top:374.00px;font-size:13px;line-height:13px;color:#1c1c1c;-webkit-text-stroke:0.15px #1c1c1c;letter-spacing:-0.707px;">USB</div>
<div class="cbx" style="left:369.3px;top:373.2px;width:11.5px;height:11.5px;border-radius:3px;"></div>
<div class="t" style="left:387.60px;top:374.00px;font-size:13px;line-height:13px;color:#1c1c1c;-webkit-text-stroke:0.15px #1c1c1c;letter-spacing:-0.002px;">Firewire</div>
<div class="cbx" style="left:455.2px;top:373.2px;width:11.5px;height:11.5px;border-radius:3px;"></div>
<div class="t" style="left:473.30px;top:374.00px;font-size:13px;line-height:13px;color:#1c1c1c;-webkit-text-stroke:0.15px #1c1c1c;letter-spacing:-0.973px;">IDE</div>
<div class="cbx" style="left:529.2px;top:373.2px;width:11.5px;height:11.5px;border-radius:3px;"></div>
<div class="t" style="left:547.60px;top:374.00px;font-size:13px;line-height:13px;color:#1c1c1c;-webkit-text-stroke:0.15px #1c1c1c;letter-spacing:-0.615px;">SATA</div>
<div class="cbx" style="left:593.5px;top:373.2px;width:11.5px;height:11.5px;border-radius:3px;"></div>
<div class="t" style="left:611.30px;top:374.00px;font-size:13px;line-height:13px;color:#1c1c1c;-webkit-text-stroke:0.15px #1c1c1c;letter-spacing:-0.543px;">LPC</div>
<div class="cbx" style="left:660.4px;top:373.2px;width:11.5px;height:11.5px;border-radius:3px;"></div>
<div class="t" style="left:678.30px;top:374.00px;font-size:13px;line-height:13px;color:#1c1c1c;-webkit-text-stroke:0.15px #1c1c1c;letter-spacing:-0.279px;">SmBUS</div>
<div style="left:910px;top:344.4px;width:197.0px;height:16.2px;background:#fff;border:1px solid #b7b7b7;"></div>
<div class="t" style="left:978.25px;top:367.00px;font-size:11px;line-height:11px;color:#1c1c1c;-webkit-text-stroke:0.22px #1c1c1c;letter-spacing:0.046px;">DSDT name</div>
<div class="t" style="left:308.50px;top:415.00px;font-size:11px;line-height:11px;color:#000;-webkit-text-stroke:0.15px #000;letter-spacing:0.288px;">Drop Tables</div>
<div style="left:299.2px;top:427.2px;width:356.40000000000003px;height:114.80000000000001px;background:#ebebeb;border-radius:5px;box-shadow:inset 0 0 0 1px #e6e6e6;"></div>
<div style="left:305.3px;top:433.3px;width:332.5px;height:101.1px;background:#fff;border:1px solid #b3b3b3;overflow:hidden;">
<div style="left:0;top:35.70px;width:334.50px;height:14.00px;background:#f3f3f3;"></div>
<div style="left:0;top:63.70px;width:334.50px;height:14.00px;background:#f3f3f3;"></div>
<div style="left:0;top:91.70px;width:334.50px;height:9.40px;background:#f3f3f3;"></div>
</div>
<div style="left:306.3px;top:455.3px;width:332.5px;height:1px;background:#c8c8c8;"></div>
<div style="left:423px;top:436.3px;width:1px;height:16.0px;background:#e0e0e0;"></div>
<div style="left:495px;top:436.3px;width:1px;height:16.0px;background:#e0e0e0;"></div>
<div class="t" style="left:310.40px;top:439.00px;font-size:11.5px;line-height:11.5px;color:#262626;-webkit-text-stroke:0.15px #262626;letter-spacing:0.044px;">Signature*</div>
<div class="t" style="left:428.10px;top:439.00px;font-size:11.5px;line-height:11.5px;color:#262626;-webkit-text-stroke:0.15px #262626;letter-spacing:0.086px;">Type/key</div>
<div class="t" style="left:500.60px;top:439.00px;font-size:11.5px;line-height:11.5px;color:#262626;-webkit-text-stroke:0.15px #262626;letter-spacing:0.181px;">String[TableId]/Number...</div>
<svg style="position:absolute;left:641px;top:434px;" width="14" height="13" viewBox="0 0 14 13"><path d="M1.0 6.6 C1.6 5.6 3.0 5.0 4.4 4.6 L4.6 3.2 C4.8 1.9 6.1 1.6 6.7 2.6 C7.2 1.4 8.6 1.4 9.0 2.6 C9.6 1.6 10.9 1.8 11.1 3.0 C11.9 2.5 13.0 3.0 12.9 4.2 L12.4 8.4 C12.1 10.2 11.0 11.4 9.6 11.6 L5.8 11.6 C4.6 11.4 3.4 9.8 1.0 6.6Z" fill="#fbfbfb" stroke="#5a5a5a" stroke-width="0.9" stroke-linejoin="round"/><path d="M4.5 4.6 C6.5 3.9 9.5 3.9 12.6 4.6" fill="none" stroke="#333" stroke-width="1.1"/><path d="M7.3 6.4 V10.2 M9.5 6.4 V10.2 M11.4 6.0 V9.6" stroke="#444" stroke-width="0.9"/><path d="M6.0 11.2 H10.2" stroke="#333" stroke-width="1.0"/></svg>
<div style="left:642px;top:511px;width:11px;height:1px;background:#a9a9a9;"></div>
<div style="left:642px;top:528px;width:11px;height:1px;background:#6b6b6b;"></div>
<div style="left:647px;top:523px;width:1px;height:11px;background:#6b6b6b;"></div>
<div style="left:299.2px;top:554.4px;width:356.40000000000003px;height:83.0px;background:#ebebeb;border-radius:5px;box-shadow:inset 0 0 0 1px #e6e6e6;"></div>
<div class="cbx" style="left:307.3px;top:559.3px;width:10px;height:10px;border-radius:3px;"></div>
<div class="t" style="left:324.50px;top:560.00px;font-size:11px;line-height:11px;color:#1c1c1c;-webkit-text-stroke:0.15px #1c1c1c;letter-spacing:0.126px;">Patch APIC</div>
<div class="cbx" style="left:390.7px;top:559.3px;width:10px;height:10px;border-radius:3px;"></div>
<div class="t" style="left:407.10px;top:560.00px;font-size:11px;line-height:11px;color:#1c1c1c;-webkit-text-stroke:0.15px #1c1c1c;letter-spacing:0.175px;">Smart UPS</div>
<div class="cbx" style="left:471.7px;top:559.3px;width:10px;height:10px;border-radius:3px;"></div>
<div class="t" style="left:488.20px;top:560.00px;font-size:11px;line-height:11px;color:#1c1c1c;-webkit-text-stroke:0.15px #1c1c1c;letter-spacing:0.231px;">Halt Enabler</div>
<div class="cbx" style="left:559.4px;top:559.3px;width:10px;height:10px;border-radius:3px;"></div>
<div class="t" style="left:576.60px;top:560.00px;font-size:11px;line-height:11px;color:#1c1c1c;-webkit-text-stroke:0.15px #1c1c1c;letter-spacing:0.083px;">DisableASPM</div>
<div class="cbx" style="left:307.3px;top:577.2px;width:10px;height:10px;border-radius:3px;"></div>
<div class="t" style="left:324.50px;top:578.00px;font-size:11px;line-height:11px;color:#1c1c1c;-webkit-text-stroke:0.15px #1c1c1c;letter-spacing:0.351px;">AutoMerge</div>
<div style="left:307px;top:594px;width:160.0px;height:20.0px;background:#fff;border:1px solid #b7b7b7;"></div>
<div style="left:485px;top:594px;width:161.0px;height:20.0px;background:#fff;border:1px solid #b7b7b7;"></div>
<div class="t" style="left:372.35px;top:600.00px;font-size:13px;line-height:13px;color:#c3c3c3;letter-spacing:0.763px;">0x64</div>
<div class="t" style="left:551.30px;top:600.00px;font-size:13px;line-height:13px;color:#c3c3c3;letter-spacing:-0.452px;">0xFE</div>
<div class="t" style="left:351.40px;top:618.00px;font-size:11px;line-height:11px;color:#1c1c1c;-webkit-text-stroke:0.22px #1c1c1c;letter-spacing:0.287px;">Reset Address</div>
<div class="t" style="left:535.70px;top:618.00px;font-size:11px;line-height:11px;color:#1c1c1c;-webkit-text-stroke:0.22px #1c1c1c;letter-spacing:0.148px;">Reset Value</div>
<div class="t" style="left:688.20px;top:415.00px;font-size:11px;line-height:11px;color:#000;-webkit-text-stroke:0.15px #000;letter-spacing:-0.405px;">SSDT</div>
<div style="left:679.2px;top:427.4px;width:578.8px;height:115.10000000000002px;background:#ebebeb;border-radius:5px;box-shadow:inset 0 0 0 1px #e6e6e6;"></div>
<div class="cbx" style="left:686.2px;top:434.3px;width:10px;height:10px;border-radius:3px;"></div>
<div class="t" style="left:703.60px;top:435.00px;font-size:11px;line-height:11px;color:#1c1c1c;-webkit-text-stroke:0.15px #1c1c1c;letter-spacing:0.285px;">Double First State</div>
<div class="cbx" style="left:815.2px;top:434.3px;width:10px;height:10px;border-radius:3px;"></div>
<div class="t" style="left:832.50px;top:435.00px;font-size:11px;line-height:11px;color:#1c1c1c;-webkit-text-stroke:0.15px #1c1c1c;letter-spacing:0.089px;">Drop OEM</div>
<div class="cbx" style="left:904.1px;top:434.3px;width:10px;height:10px;border-radius:3px;"></div>
<div class="t" style="left:921.60px;top:435.00px;font-size:11px;line-height:11px;color:#1c1c1c;-webkit-text-stroke:0.15px #1c1c1c;letter-spacing:0.173px;">Use SystemIO</div>
<div class="cbx" style="left:1013.5px;top:434.3px;width:10px;height:10px;border-radius:3px;"></div>
<div class="t" style="left:1030.30px;top:435.00px;font-size:11px;line-height:11px;color:#1c1c1c;-webkit-text-stroke:0.15px #1c1c1c;letter-spacing:0.175px;">NoOemTableId</div>
<div class="cbx" style="left:686.2px;top:453.5px;width:10px;height:10px;border-radius:3px;"></div>
<div class="t" style="left:703.60px;top:454.00px;font-size:11px;line-height:11px;color:#1c1c1c;-webkit-text-stroke:0.15px #1c1c1c;letter-spacing:0.348px;">NoDynamicExtract</div>
<div class="t" style="left:687.40px;top:474.00px;font-size:11px;line-height:11px;color:#1c1c1c;-webkit-text-stroke:0.22px #1c1c1c;letter-spacing:0.229px;">Plugin Type</div>
<div style="left:755.3px;top:470.4px;width:42.60px;height:15.50px;background:#fff;border:1px solid #b5b5b5;"></div>
<div style="left:786.1px;top:470.4px;width:15.80px;height:17.50px;background:linear-gradient(#5ea6fb,#1b73f8);border-radius:0 3px 3px 0;"></div>
<svg style="position:absolute;left:786.1px;top:470.4px;" width="15.8" height="17.5" viewBox="0 0 15.8 17.5"><path d="M4.70 7.35 L7.90 10.35 L11.10 7.35" fill="none" stroke="#fff" stroke-width="1.4"/></svg>
<div class="t" style="left:831.30px;top:474.00px;font-size:11px;line-height:11px;color:#1c1c1c;-webkit-text-stroke:0.22px #1c1c1c;letter-spacing:0.342px;">PLimit Dict</div>
<div style="left:898.2px;top:470.4px;width:42.60px;height:15.50px;background:#fff;border:1px solid #b5b5b5;"></div>
<div style="left:929px;top:470.4px;width:15.80px;height:17.50px;background:linear-gradient(#5ea6fb,#1b73f8);border-radius:0 3px 3px 0;"></div>
<svg style="position:absolute;left:929px;top:470.4px;" width="15.8" height="17.5" viewBox="0 0 15.8 17.5"><path d="M4.70 7.35 L7.90 10.35 L11.10 7.35" fill="none" stroke="#fff" stroke-width="1.4"/></svg>
<div class="t" style="left:963.40px;top:474.00px;font-size:11px;line-height:11px;color:#1c1c1c;-webkit-text-stroke:0.22px #1c1c1c;letter-spacing:0.371px;">UnderVolt Step</div>
<div style="left:1051.3px;top:470.4px;width:48.40px;height:15.50px;background:#fff;border:1px solid #b5b5b5;"></div>
<div style="left:1088px;top:470.4px;width:15.70px;height:17.50px;background:linear-gradient(#5ea6fb,#1b73f8);border-radius:0 3px 3px 0;"></div>
<svg style="position:absolute;left:1088px;top:470.4px;" width="15.7" height="17.5" viewBox="0 0 15.7 17.5"><path d="M4.65 7.35 L7.85 10.35 L11.05 7.35" fill="none" stroke="#fff" stroke-width="1.4"/></svg>
<div class="t" style="left:687.40px;top:499.00px;font-size:11px;line-height:11px;color:#1c1c1c;-webkit-text-stroke:0.22px #1c1c1c;letter-spacing:0.416px;">Min Multiplier</div>
<div style="left:765px;top:495.3px;width:31.7px;height:16.3px;background:#fff;border:1px solid #b7b7b7;"></div>
<div class="t" style="left:815.40px;top:500.00px;font-size:11px;line-height:11px;color:#1c1c1c;-webkit-text-stroke:0.22px #1c1c1c;letter-spacing:0.364px;">Max Multiplier</div>
<div style="left:898.2px;top:495.3px;width:31.6px;height:16.3px;background:#fff;border:1px solid #b7b7b7;"></div>
<div class="t" style="left:948.60px;top:500.00px;font-size:11px;line-height:11px;color:#1c1c1c;-webkit-text-stroke:0.22px #1c1c1c;letter-spacing:0.316px;">C3 Latency</div>
<div style="left:1018.3px;top:495.3px;width:82.4px;height:16.3px;background:#fff;border:1px solid #b7b7b7;"></div>
<div class="t" style="left:1022.20px;top:500.00px;font-size:11.5px;line-height:11.5px;color:#c0c0c0;letter-spacing:0.094px;">hex or number</div>
<div class="cbx" style="left:687.4px;top:524.4px;width:10px;height:10px;border-radius:3px;"></div>
<div class="t" style="left:704.30px;top:525.00px;font-size:11px;line-height:11px;color:#1c1c1c;-webkit-text-stroke:0.15px #1c1c1c;letter-spacing:0.073px;">EnableC2</div>
<div class="cbx" style="left:779.8px;top:524.4px;width:10px;height:10px;border-radius:3px;"></div>
<div class="t" style="left:796.50px;top:525.00px;font-size:11px;line-height:11px;color:#1c1c1c;-webkit-text-stroke:0.15px #1c1c1c;letter-spacing:0.130px;">EnableC4</div>
<div class="cbx" style="left:871.2px;top:524.4px;width:10px;height:10px;border-radius:3px;"></div>
<div class="t" style="left:888.70px;top:525.00px;font-size:11px;line-height:11px;color:#1c1c1c;-webkit-text-stroke:0.15px #1c1c1c;letter-spacing:0.073px;">EnableC6</div>
<div class="cbx" style="left:963.3px;top:524.4px;width:10px;height:10px;border-radius:3px;"></div>
<div class="t" style="left:980.40px;top:525.00px;font-size:11px;line-height:11px;color:#1c1c1c;-webkit-text-stroke:0.15px #1c1c1c;letter-spacing:0.001px;">EnableC7</div>
<div class="t" style="left:1144.70px;top:432.00px;font-size:11px;line-height:11px;color:#1c1c1c;-webkit-text-stroke:0.15px #1c1c1c;letter-spacing:0.297px;">Generate Options</div>
<div style="left:1135px;top:444px;width:115.70000000000005px;height:89.70000000000005px;background:#e2e2e2;border-radius:4px;box-shadow:inset 0 1px 0 #d9d9d9;"></div>
<div class="cbx" style="left:1138.4px;top:450.4px;width:9.5px;height:9.5px;border-radius:3px;"></div>
<div class="t" style="left:1155.50px;top:451.00px;font-size:11px;line-height:11px;color:#1c1c1c;-webkit-text-stroke:0.15px #1c1c1c;letter-spacing:0.203px;">Generate PStates</div>
<div class="cbx" style="left:1138.4px;top:467.29999999999995px;width:9.5px;height:9.5px;border-radius:3px;"></div>
<div class="t" style="left:1155.50px;top:468.00px;font-size:11px;line-height:11px;color:#1c1c1c;-webkit-text-stroke:0.15px #1c1c1c;letter-spacing:0.250px;">Generate CStates</div>
<div class="cbx" style="left:1138.4px;top:484.2px;width:9.5px;height:9.5px;border-radius:3px;"></div>
<div class="t" style="left:1155.50px;top:485.00px;font-size:11px;line-height:11px;color:#1c1c1c;-webkit-text-stroke:0.15px #1c1c1c;letter-spacing:-0.458px;">APSN</div>
<div class="cbx" style="left:1138.4px;top:501.09999999999997px;width:9.5px;height:9.5px;border-radius:3px;"></div>
<div class="t" style="left:1155.50px;top:502.00px;font-size:11px;line-height:11px;color:#1c1c1c;-webkit-text-stroke:0.15px #1c1c1c;letter-spacing:-0.333px;">APLF</div>
<div class="cbx" style="left:1138.4px;top:518.0px;width:9.5px;height:9.5px;border-radius:3px;"></div>
<div class="t" style="left:1155.50px;top:519.00px;font-size:11px;line-height:11px;color:#1c1c1c;-webkit-text-stroke:0.15px #1c1c1c;letter-spacing:0.128px;">PluginType</div>
<div class="t" style="left:688.40px;top:550.00px;font-size:11px;line-height:11px;color:#000;-webkit-text-stroke:0.15px #000;letter-spacing:0.275px;">DisabledAML</div>
<div style="left:679px;top:562.3px;width:279.5px;height:74.90000000000009px;background:#ebebeb;border-radius:5px;box-shadow:inset 0 0 0 1px #e6e6e6;"></div>
<div style="left:682.4px;top:565.2px;width:255.4px;height:67.8px;background:#fff;border:1px solid #b3b3b3;overflow:hidden;">
<div style="left:0;top:16.80px;width:257.40px;height:17.00px;background:#f3f3f3;"></div>
<div style="left:0;top:50.80px;width:257.40px;height:17.00px;background:#f3f3f3;"></div>
</div>
<svg style="position:absolute;left:943px;top:567px;" width="14" height="13" viewBox="0 0 14 13"><path d="M1.0 6.6 C1.6 5.6 3.0 5.0 4.4 4.6 L4.6 3.2 C4.8 1.9 6.1 1.6 6.7 2.6 C7.2 1.4 8.6 1.4 9.0 2.6 C9.6 1.6 10.9 1.8 11.1 3.0 C11.9 2.5 13.0 3.0 12.9 4.2 L12.4 8.4 C12.1 10.2 11.0 11.4 9.6 11.6 L5.8 11.6 C4.6 11.4 3.4 9.8 1.0 6.6Z" fill="#fbfbfb" stroke="#5a5a5a" stroke-width="0.9" stroke-linejoin="round"/><path d="M4.5 4.6 C6.5 3.9 9.5 3.9 12.6 4.6" fill="none" stroke="#333" stroke-width="1.1"/><path d="M7.3 6.4 V10.2 M9.5 6.4 V10.2 M11.4 6.0 V9.6" stroke="#444" stroke-width="0.9"/><path d="M6.0 11.2 H10.2" stroke="#333" stroke-width="1.0"/></svg>
<div style="left:943.5px;top:610px;width:11px;height:1px;background:#a9a9a9;"></div>
<div style="left:943.5px;top:625px;width:11px;height:1px;background:#6b6b6b;"></div>
<div style="left:948.5px;top:620px;width:1px;height:11px;background:#6b6b6b;"></div>
<div class="t" style="left:988.60px;top:550.00px;font-size:11px;line-height:11px;color:#000;-webkit-text-stroke:0.15px #000;letter-spacing:0.395px;">SortedOrder</div>
<div style="left:979px;top:562.3px;width:279.5px;height:74.90000000000009px;background:#ebebeb;border-radius:5px;box-shadow:inset 0 0 0 1px #e6e6e6;"></div>
<div style="left:982.4px;top:566.4px;width:255.4px;height:65.4px;background:#fff;border:1px solid #b3b3b3;overflow:hidden;">
<div style="left:0;top:15.60px;width:257.40px;height:16.00px;background:#f3f3f3;"></div>
<div style="left:0;top:47.60px;width:257.40px;height:16.00px;background:#f3f3f3;"></div>
</div>
<svg style="position:absolute;left:1243px;top:567px;" width="14" height="13" viewBox="0 0 14 13"><path d="M1.0 6.6 C1.6 5.6 3.0 5.0 4.4 4.6 L4.6 3.2 C4.8 1.9 6.1 1.6 6.7 2.6 C7.2 1.4 8.6 1.4 9.0 2.6 C9.6 1.6 10.9 1.8 11.1 3.0 C11.9 2.5 13.0 3.0 12.9 4.2 L12.4 8.4 C12.1 10.2 11.0 11.4 9.6 11.6 L5.8 11.6 C4.6 11.4 3.4 9.8 1.0 6.6Z" fill="#fbfbfb" stroke="#5a5a5a" stroke-width="0.9" stroke-linejoin="round"/><path d="M4.5 4.6 C6.5 3.9 9.5 3.9 12.6 4.6" fill="none" stroke="#333" stroke-width="1.1"/><path d="M7.3 6.4 V10.2 M9.5 6.4 V10.2 M11.4 6.0 V9.6" stroke="#444" stroke-width="0.9"/><path d="M6.0 11.2 H10.2" stroke="#333" stroke-width="1.0"/></svg>
<div style="left:1243.5px;top:611px;width:11px;height:1px;background:#a9a9a9;"></div>
<div style="left:1243.5px;top:628.2px;width:11px;height:1px;background:#6b6b6b;"></div>
<div style="left:1248.5px;top:623.2px;width:1px;height:11px;background:#6b6b6b;"></div>
</body></html>
